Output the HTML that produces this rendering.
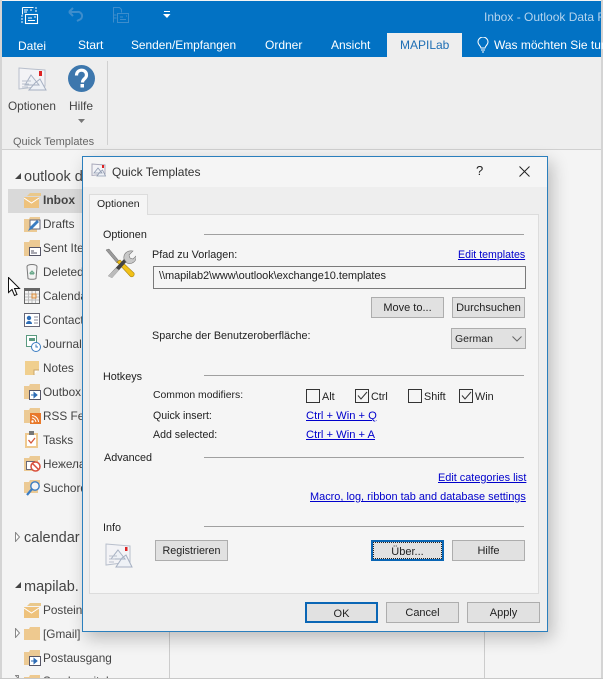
<!DOCTYPE html>
<html><head><meta charset="utf-8"><style>
html,body{margin:0;padding:0;background:#f4f4f4}
#r{position:relative;width:603px;height:679px;overflow:hidden;background:#f4f4f4;font-family:"Liberation Sans","DejaVu Sans",sans-serif;font-size:10.800px;color:#222}
#r div,#r a,#r svg{position:absolute}
.t{white-space:nowrap;line-height:14px}
.w{color:#fff;font-size:12px}
.n{color:#444;font-size:11.800px;left:43px}
.l{color:#00c;text-decoration:underline;white-space:nowrap;line-height:14px;font-size:11px}
.b{box-sizing:border-box;background:#e1e1e1;border:1px solid #adadad;text-align:center;line-height:21px;color:#222;height:21px;font-size:11px}
.h{height:1px;background:#a0a0a0}
.c{width:12px;height:12px;border:1px solid #333;background:#f5f5f5}
</style></head><body><div id="r">
<div style="left:0;top:0;width:2px;height:679px;background:#d4d4d4"></div>
<div style="left:601px;top:0;width:2px;height:679px;background:#d4d4d4"></div>
<div style="left:0;top:678px;width:603px;height:1px;background:#c8c8c8"></div>
<div style="left:2px;top:1px;width:599px;height:56px;background:#0272c4"></div>
<div style="left:2px;top:57px;width:599px;height:92px;background:#eee"></div>
<div style="left:2px;top:149px;width:599px;height:1px;background:#d0d0d0"></div>
<div style="left:169px;top:631px;width:1px;height:47px;background:#ccc"></div>
<div style="left:484px;top:631px;width:1px;height:47px;background:#ccc"></div>

<!-- QAT -->
<svg style="left:20px;top:6px" width="19" height="19" viewBox="0 0 19 19" fill="none" stroke="#fff" stroke-width="1.1"><path d="M2.500 1.500h11M2.500 1.500v7M4 4h4M4 6h3M10 4h2"/><path d="M15 2h2M15 5h2M1 10h2M1 13h2M1 16h2"/><rect x="5.500" y="8.500" width="12" height="9"/><path d="M8 12h4M8 14.500h7M14 11h2"/></svg>
<svg style="left:66px;top:6px" width="18" height="18" viewBox="0 0 18 18" fill="none" stroke="#3d8dcc" stroke-width="2"><path d="M3 6h8a4 4 0 0 1 2 8l-2 1M3 6l4-4M3 6l4 4"/></svg>
<svg style="left:112px;top:6px" width="18" height="18" viewBox="0 0 18 18" fill="none" stroke="#3d8dcc" stroke-width="1"><path d="M1.500 16.500V1.500h6l2 2v3M1.500 9h3M1.500 12h3"/><rect x="5.500" y="7.500" width="11" height="9"/><path d="M8 11h3M8 13.500h6M14 10h1"/></svg>
<svg style="left:163px;top:11px" width="8" height="8" viewBox="0 0 8 8" fill="#fff"><rect x="1" y="0" width="6" height="1"/><path d="M0 3h7.500L4 7z"/></svg>
<div class="t" style="left:484px;top:10px;color:#b5d4ee;font-size:12px">Inbox - Outlook Data F</div>

<!-- tabs -->
<div class="t w" style="left:18px;top:39px">Datei</div>
<div class="t w" style="left:78px;top:38px">Start</div>
<div class="t w" style="left:131px;top:38px;font-size:11.900px">Senden/Empfangen</div>
<div class="t w" style="left:265px;top:38px">Ordner</div>
<div class="t w" style="left:331px;top:38px">Ansicht</div>
<div style="left:387px;top:33px;width:75px;height:24px;background:#eee"></div>
<div class="t" style="left:400px;top:38px;color:#1e6eb4;font-size:12px">MAPILab</div>
<svg style="left:477px;top:37px" width="12" height="16" viewBox="0 0 12 16" fill="none" stroke="#fff" stroke-width="1"><path d="M4 11c0-2-3-3-3-6a5 5 0 0 1 10 0c0 3-3 4-3 6zM4 13h4M5 15h2"/></svg>
<div class="t w" style="left:494px;top:38px">Was möchten Sie tun</div>

<!-- ribbon -->
<svg style="left:17px;top:66px" width="32" height="28" viewBox="0 0 32 28"><path d="M2 2l12 1 14 1v16l-26 3z" fill="#f3f3f6" stroke="#b8bfcc"/><rect x="22" y="5" width="3" height="5" fill="#d22"/><path d="M14 9l8 10H8zM18 17l5-4 6 11H12z" fill="#eef1f6" stroke="#a6b0c2"/><path d="M5 15h9M5 18h7M5 21h6" stroke="#b8bfcc"/></svg>
<div class="t" style="left:8px;top:99px;font-size:11.800px;color:#444">Optionen</div>
<svg style="left:68px;top:65px" width="27" height="27" viewBox="0 0 27 27"><circle cx="13.500" cy="13.500" r="13.500" fill="#3d77ad"/><path d="M8.500 10.500c0-7 10-7 10-.5 0 4-4 3.500-4 7.500" fill="none" stroke="#fff" stroke-width="3.200"/><rect x="12.500" y="19" width="3.500" height="3.500" fill="#fff"/></svg>
<div class="t" style="left:69px;top:99px;font-size:12px;color:#444">Hilfe</div>
<svg style="left:78px;top:119px" width="7" height="5"><path d="M0 0h7L3.500 4z" fill="#777"/></svg>
<div class="t" style="left:13px;top:135px;font-size:11px;color:#666">Quick Templates</div>
<div style="left:107px;top:61px;width:1px;height:84px;background:#d0d0d0"></div>

<!-- nav -->
<svg style="left:15px;top:173px" width="7" height="7"><path d="M6 0v6H0z" fill="#444"/></svg>
<div class="t" style="left:24px;top:170px;font-size:14.500px;color:#444">outlook d</div>
<div style="left:8px;top:189px;width:80px;height:24px;background:#d9d9d9"></div>
<svg style="left:24px;top:193px" width="17" height="15" viewBox="0 0 17 15"><path d="M3 3h14V0H6z" fill="#e9c88b"/><rect x="0" y="4" width="15" height="11" fill="#eec27c"/><path d="M0 5l7.500 5L15 5" fill="none" stroke="#fff"/></svg>
<div class="t" style="left:43px;top:193px;font-size:12px;font-weight:bold;color:#444">Inbox</div>
<svg style="left:24px;top:217px" width="17" height="15" viewBox="0 0 17 15"><path d="M0 2h5l1-2h10v3H0zM0 3h13v12H0z" fill="#ecca94"/><rect x="6" y="3" width="10" height="9" fill="#fff" stroke="#667"/><path d="M4 14l2-4 7-7 2 2-7 7z" fill="#3a7cc2"/></svg>
<div class="t n" style="top:217px">Drafts</div>
<svg style="left:24px;top:240px" width="17" height="16" viewBox="0 0 17 16"><path d="M0 2h5l1-2h10v4H0zM0 4h16v12H0z" fill="#ecca94"/><rect x="5.500" y="7.500" width="11" height="8" fill="#fff" stroke="#556"/><path d="M7 11h3M7 13h6" stroke="#556"/></svg>
<div class="t n" style="top:241px">Sent Ite</div>
<svg style="left:26px;top:264px" width="12" height="16" viewBox="0 0 12 16" fill="#f3f3f3" stroke="#7a7a7a"><ellipse cx="6" cy="2.500" rx="5" ry="2"/><path d="M1 3l1 11.500c1 1 7 1 8 0L11 3"/><path d="M4 9h4l-2-2zM4 10h4" stroke="#69a88a"/></svg>
<div class="t n" style="top:265px">Deleted</div>
<svg style="left:24px;top:288px" width="16" height="16" viewBox="0 0 16 16"><rect width="16" height="16" fill="#666"/><rect x="1" y="3" width="14" height="12" fill="#f4f4f4"/><path d="M1 6h14M1 9h14M1 12h14M4.500 3v12M8 3v12M11.500 3v12" stroke="#bbb"/><rect x="8" y="6" width="4" height="4" fill="#f3e0c4" stroke="#d88a3c"/></svg>
<div class="t n" style="top:289px">Calenda</div>
<svg style="left:24px;top:313px" width="16" height="14" viewBox="0 0 16 14"><rect x=".5" y=".5" width="15" height="13" fill="#fff" stroke="#667"/><circle cx="5" cy="5" r="2.200" fill="#2d6cb5"/><path d="M2 11c0-4 6-4 6 0z" fill="#2d6cb5"/><path d="M10 4h4M10 7h4M10 10h4" stroke="#889"/></svg>
<div class="t n" style="top:313px">Contact</div>
<svg style="left:26px;top:335px" width="15" height="17" viewBox="0 0 15 17" fill="none"><rect x=".5" y=".5" width="10" height="11" fill="#fff" stroke="#5a9a80"/><rect x="3" y="3" width="6" height="3" fill="#5a9a80"/><circle cx="10" cy="12" r="4.500" fill="#fff" stroke="#3a7cc2"/><path d="M10 9.500V12h2" stroke="#3a7cc2"/></svg>
<div class="t n" style="top:337px">Journal</div>
<svg style="left:25px;top:361px" width="14" height="14" viewBox="0 0 14 14"><path d="M0 0h14v9l-5 5H0z" fill="#f0cf8e"/><path d="M9 14V9h5z" fill="#fff"/><path d="M9 14V9h5" fill="none" stroke="#c9a66a"/></svg>
<div class="t n" style="top:361px">Notes</div>
<svg style="left:24px;top:384px" width="17" height="16" viewBox="0 0 17 16"><path d="M0 2h5l1-2h10v4H0zM0 4h16v11H0z" fill="#ecca94"/><rect x="5.500" y="6.500" width="11" height="9" fill="#fff" stroke="#556"/><path d="M7 11h5M10 8.500l3 2.500-3 2.500z" fill="#2d6cb5" stroke="#2d6cb5"/></svg>
<div class="t n" style="top:385px">Outbox</div>
<svg style="left:24px;top:408px" width="17" height="16" viewBox="0 0 17 16"><path d="M0 2h5l1-2h10v4H0zM0 4h16v11H0z" fill="#ecca94"/><rect x="6" y="5" width="11" height="11" fill="#e8792a"/><circle cx="8.500" cy="13.500" r="1.200" fill="#fff"/><path d="M8 10a5 5 0 0 1 4 4M8 7.500a7 7 0 0 1 6.500 6.500" stroke="#fff" fill="none"/></svg>
<div class="t n" style="top:409px">RSS Fee</div>
<svg style="left:25px;top:431px" width="13" height="17" viewBox="0 0 13 17"><rect y="2" width="13" height="15" fill="#eec98f"/><rect x="2" y="4" width="9" height="11" fill="#fff"/><rect x="4" y="0" width="5" height="4" fill="#777"/><path d="M3.500 9l2.500 3 4-5" fill="none" stroke="#d4553a" stroke-width="1.300"/></svg>
<div class="t n" style="top:433px">Tasks</div>
<svg style="left:24px;top:456px" width="17" height="16" viewBox="0 0 17 16"><path d="M0 2h5l1-2h10v4H0zM0 4h14v11H0z" fill="#ecca94"/><rect x="2.500" y="5.500" width="8" height="8" fill="#fff" stroke="#667"/><circle cx="11.500" cy="10.500" r="4.500" fill="#fff" stroke="#d9503c" stroke-width="1.500"/><path d="M8.500 7.500l6 6" stroke="#d9503c" stroke-width="1.500"/></svg>
<div class="t n" style="top:457px">Нежела</div>
<svg style="left:24px;top:480px" width="17" height="16" viewBox="0 0 17 16"><path d="M0 2h5l1-2h10v4H0zM0 4h14v9H0z" fill="#ecca94"/><circle cx="11" cy="6" r="4.200" fill="#f4f4f4" stroke="#3a7cc2" stroke-width="1.400"/><path d="M8 9l-5 6" stroke="#3a7cc2" stroke-width="2.200"/></svg>
<div class="t n" style="top:481px">Suchord</div>
<svg style="left:15px;top:532px" width="6" height="10"><path d="M.5.500l4 4.500-4 4.500z" fill="#fff" stroke="#888"/></svg>
<div class="t" style="left:24px;top:531px;font-size:14.500px;color:#444">calendar</div>
<svg style="left:15px;top:582px" width="7" height="7"><path d="M6 0v6H0z" fill="#444"/></svg>
<div class="t" style="left:24px;top:580px;font-size:14.500px;color:#444">mapilab.</div>
<svg style="left:24px;top:603px" width="17" height="15" viewBox="0 0 17 15"><path d="M3 3h14V0H6z" fill="#e9c88b"/><rect y="4" width="15" height="11" fill="#eec27c"/><path d="M0 5l7.500 5L15 5" fill="none" stroke="#fff"/></svg>
<div class="t n" style="top:603px">Postein</div>
<svg style="left:15px;top:628px" width="6" height="10"><path d="M.5.500l4 4.500-4 4.500z" fill="#fff" stroke="#888"/></svg>
<svg style="left:24px;top:627px" width="16" height="13"><path d="M0 2h5l1-2h10v13H0z" fill="#eec98f"/></svg>
<div class="t n" style="top:627px">[Gmail]</div>
<svg style="left:24px;top:650px" width="17" height="16" viewBox="0 0 17 16"><path d="M0 2h5l1-2h10v4H0zM0 4h16v11H0z" fill="#ecca94"/><rect x="5.500" y="6.500" width="11" height="9" fill="#fff" stroke="#556"/><path d="M7 11h5M10 8.500l3 2.500-3 2.500z" fill="#2d6cb5" stroke="#2d6cb5"/></svg>
<div class="t n" style="top:651px">Postausgang</div>
<svg style="left:15px;top:675px" width="6" height="3"><path d="M.5.500l3 3V.5z" fill="#fff" stroke="#888"/></svg>
<svg style="left:24px;top:675px" width="16" height="3"><path d="M0 2h5l1-2h10v3H0z" fill="#eec98f"/></svg>
<div class="t n" style="top:674px;height:4px;overflow:hidden">Sandmapitab</div>

<!-- dialog -->
<div style="left:82px;top:156px;width:466px;height:476px;box-sizing:border-box;border:1px solid #2b7fbd;background:#eee;box-shadow:4px 6px 16px rgba(0,0,0,.24)"></div>
<div style="left:83px;top:157px;width:464px;height:30px;background:#f5f5f5"></div>
<svg style="left:91px;top:163px" width="16" height="15" viewBox="0 0 16 15"><path d="M1 1l6 .5 7 .5v9l-13 1.500z" fill="#f3f3f6" stroke="#aab"/><rect x="11" y="2" width="2" height="3" fill="#d22"/><path d="M7 5l4 5H3zM9 9l2.500-2 3 6H6z" fill="#eef1f6" stroke="#8f9ab0" stroke-width=".8"/></svg>
<div class="t" style="left:112px;top:165px;font-size:12px;color:#333">Quick Templates</div>
<div class="t" style="left:476px;top:164px;font-size:13px;color:#222">?</div>
<svg style="left:519px;top:166px" width="11" height="11"><path d="M.5.500l10 10M10.500.500l-10 10" stroke="#222" stroke-width="1"/></svg>

<div style="left:89px;top:214px;width:450px;height:380px;box-sizing:border-box;border:1px solid #dcdcdc;background:#f5f5f5"></div>
<div style="left:89px;top:194px;width:59px;height:21px;box-sizing:border-box;border:1px solid #dcdcdc;border-bottom:0;background:#f5f5f5"></div>
<div class="t" style="left:97px;top:197px;font-size:10.500px">Optionen</div>

<div class="t" style="left:103px;top:228px">Optionen</div>
<div class="h" style="left:204px;top:234px;width:320px"></div>
<svg style="left:104px;top:247px" width="32" height="32" viewBox="0 0 32 32"><path d="M2 3l3-1 10 12-2 2z" fill="#9a9a9a" stroke="#666" stroke-width=".5"/><path d="M13 15l3-2 14 13c1 3-2 5-4 3z" fill="#f2c118" stroke="#a88410" stroke-width=".6"/><path d="M4 29l17-18 3 2L8 31z" fill="#444"/><path d="M4 29l8-8 3 2-7 8z" fill="#bbb"/><path d="M20 12c-1-5 3-9 9-8l-4 4 1 3 3 1 3-3c1 5-4 9-9 7z" fill="#c8c8c8" stroke="#777" stroke-width=".6"/></svg>
<div class="t" style="left:152px;top:248px">Pfad zu Vorlagen:</div>
<a class="l" style="left:458px;top:248px;font-size:10.600px">Edit templates</a>
<div style="left:153px;top:266px;width:373px;height:23px;box-sizing:border-box;border:1px solid #7a7a7a;background:#f5f5f5"></div>
<div class="t" style="left:159px;top:269px;font-size:11px;letter-spacing:-.07px">\\mapilab2\www\outlook\exchange10.templates</div>
<div class="b" style="left:371px;top:297px;width:73px">Move to...</div>
<div class="b" style="left:452px;top:297px;width:73px">Durchsuchen</div>
<div class="t" style="left:152px;top:329px">Sparche der Benutzeroberfläche:</div>
<div class="b" style="left:451px;top:328px;width:75px;text-align:left;padding-left:3px;font-size:10.500px">German</div>
<svg style="left:512px;top:336px" width="10" height="6"><path d="M.5.500L5 5 9.500.500" fill="none" stroke="#666"/></svg>

<div class="t" style="left:103px;top:370px">Hotkeys</div>
<div class="h" style="left:204px;top:375px;width:320px"></div>
<div class="t" style="left:153px;top:389px;font-size:10.400px">Common modifiers:</div>
<div class="c" style="left:306px;top:389px"></div><div class="t" style="left:322px;top:390px">Alt</div>
<div class="c" style="left:355px;top:389px"></div><svg style="left:357px;top:391px" width="11" height="10"><path d="M1 4.500l3 3.500 6-7" fill="none" stroke="#333"/></svg><div class="t" style="left:371px;top:390px">Ctrl</div>
<div class="c" style="left:408px;top:389px"></div><div class="t" style="left:424px;top:390px">Shift</div>
<div class="c" style="left:459px;top:389px"></div><svg style="left:461px;top:391px" width="11" height="10"><path d="M1 4.500l3 3.500 6-7" fill="none" stroke="#333"/></svg><div class="t" style="left:475px;top:390px">Win</div>
<div class="t" style="left:153px;top:409px;font-size:10.600px">Quick insert:</div>
<a class="l" style="left:306px;top:409px;font-size:11.200px">Ctrl + Win + Q</a>
<div class="t" style="left:153px;top:428px;font-size:10.600px">Add selected:</div>
<a class="l" style="left:306px;top:428px;font-size:11.200px">Ctrl + Win + A</a>
<div class="t" style="left:104px;top:451px">Advanced</div>
<div class="h" style="left:204px;top:457px;width:320px"></div>
<a class="l" style="left:438px;top:471px;font-size:10.900px">Edit categories list</a>
<a class="l" style="left:310px;top:490px;font-size:10.940px">Macro, log, ribbon tab and database settings</a>

<div class="t" style="left:103px;top:521px">Info</div>
<div class="h" style="left:204px;top:526px;width:320px"></div>
<svg style="left:105px;top:543px" width="29" height="26" viewBox="0 0 29 26"><path d="M1 1l12 1 12 1v16L1 22z" fill="#f3f3f6" stroke="#b8bfcc"/><rect x="20" y="4" width="2.500" height="4" fill="#d22"/><path d="M13 7l7 9H6zM17 15l4-3 6 12H11z" fill="#eef1f6" stroke="#a6b0c2"/><path d="M4 13h8M4 16h6M4 19h5" stroke="#b8bfcc"/></svg>
<div class="b" style="left:155px;top:540px;width:73px;font-size:10.750px">Registrieren</div>
<div class="b" style="left:371px;top:540px;width:73px;border:2px solid #0a66b5;line-height:20px;outline:1px dotted #222;outline-offset:-3px">Über...</div>
<div class="b" style="left:452px;top:540px;width:73px">Hilfe</div>
<div class="b" style="left:305px;top:602px;width:73px;border:2px solid #0a66b5;line-height:20px">OK</div>
<div class="b" style="left:386px;top:602px;width:73px">Cancel</div>
<div class="b" style="left:467px;top:602px;width:73px">Apply</div>

<!-- cursor -->
<svg style="left:8px;top:277px" width="13" height="20" viewBox="0 0 13 20"><path d="M.5.500v15l3.500-3 2.500 6 2.500-1-2.500-6h5z" fill="#fff" stroke="#111"/></svg>
</div></body></html>
